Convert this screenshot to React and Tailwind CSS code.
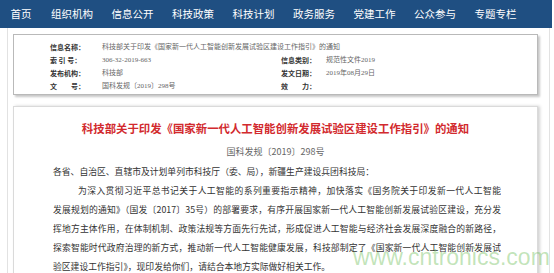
import React from "react";

const navItems = ["首页", "组织机构", "信息公开", "科技政策", "科技计划", "政务服务", "党建工作", "公众参与", "专题专栏"];

const cjk = { fontFamily: '"Noto Sans CJK SC", "Noto Sans", sans-serif' };
const serifCjk = { fontFamily: '"Liberation Serif", "Noto Sans CJK SC", serif' };

const InfoRow = ({ label, value, rightLabel, rightValue, full }) => (
  <div className="flex h-[13px] items-center text-[7px] leading-[13px]">
    <div className={full ? "flex" : "flex w-[231px]"}>
      <span className="w-[52px] shrink-0 font-bold text-[#333]">{label}</span>
      <span className="text-[#666]" style={serifCjk}>
        {value}
      </span>
    </div>
    {!full && (
      <div className="flex">
        <span className="w-[45px] shrink-0 font-bold text-[#333]">{rightLabel}</span>
        <span className="text-[#666]" style={serifCjk}>
          {rightValue}
        </span>
      </div>
    )}
  </div>
);

const App = () => {
  const fullLine = "overflow-hidden text-justify [text-align-last:justify]";

  return (
    <div className="relative h-[273px] w-[554px] overflow-hidden bg-white" style={cjk}>
      {/* top nav */}
      <div className="flex h-[28px] w-[552px] items-center gap-[18.5px] bg-[#1f4f82] pl-[10.5px] text-[10.5px] text-white">
        {navItems.map((item, i) => (
          <span key={item} className={i === 0 ? "mr-[1px]" : ""}>
            {item}
          </span>
        ))}
      </div>

      <div className="ml-[7px] h-[245px] w-[543px] border-x border-[#e2e2e2] pl-[5px] pt-[6px]">
        {/* info box */}
        <div className="w-[525px] border border-[#b9b9b9] bg-white pb-[1px] pl-[36px] pt-[5px] shadow-[2px_2px_2px_rgba(0,0,0,0.22)]">
          <div className="h-[1px]" />
          <InfoRow
            full
            label="信息名称："
            value="科技部关于印发《国家新一代人工智能创新发展试验区建设工作指引》的通知"
          />
          <InfoRow label="索 引 号：" value="306-32-2019-663" rightLabel="信息类别：" rightValue="规范性文件2019" />
          <InfoRow label="发布机构：" value="科技部" rightLabel="发文日期：" rightValue="2019年08月29日" />
          <InfoRow label="文　　号：" value="国科发规〔2019〕298号" rightLabel="效　　力：" rightValue="" />
        </div>

        {/* article panel */}
        <div className="mt-[11px] h-[200px] w-[525px] border border-[#dadada] bg-white pt-[13px] shadow-[2px_0_3px_rgba(0,0,0,0.18)]">
          <h1 className="h-[16px] text-center text-[11.4px] font-bold leading-[16px] text-[#d22a2e]">
            科技部关于印发《国家新一代人工智能创新发展试验区建设工作指引》的通知
          </h1>
          <div className="mt-[9px] h-[14px] text-center text-[9px] leading-[14px] text-[#666]">
            国科发规〔2019〕298号
          </div>

          <div className="mt-[2.5px] pl-[39px] pr-[36px] text-[8.8px] leading-[19px] text-[#333]">
            <div className="h-[19px] whitespace-nowrap">
              各省、自治区、直辖市及计划单列市科技厅（委、局），新疆生产建设兵团科技局：
            </div>
            <div className={`h-[19px] pl-[25px] ${fullLine}`}>
              为深入贯彻习近平总书记关于人工智能的系列重要指示精神，加快落实《国务院关于印发新一代人工智能
            </div>
            <div className={`h-[19px] ${fullLine}`}>
              发展规划的通知》（国发〔2017〕35号）的部署要求，有序开展国家新一代人工智能创新发展试验区建设，充分发
            </div>
            <div className={`h-[19px] ${fullLine}`}>
              挥地方主体作用，在体制机制、政策法规等方面先行先试，形成促进人工智能与经济社会发展深度融合的新路径，
            </div>
            <div className={`h-[19px] ${fullLine}`}>
              探索智能时代政府治理的新方式，推动新一代人工智能健康发展，科技部制定了《国家新一代人工智能创新发展试
            </div>
            <div className="h-[19px] whitespace-nowrap">
              验区建设工作指引》，现印发给你们，请结合本地方实际做好相关工作。
            </div>
          </div>
        </div>
      </div>

      {/* watermark */}
      <div
        className="absolute left-[353px] top-[243px] text-[23px] leading-[28px] text-[rgba(120,195,100,0.45)]"
        style={{ fontFamily: '"Liberation Sans", Arial, sans-serif' }}
      >
        www.cntronics.com
      </div>
    </div>
  );
};

export default App;
